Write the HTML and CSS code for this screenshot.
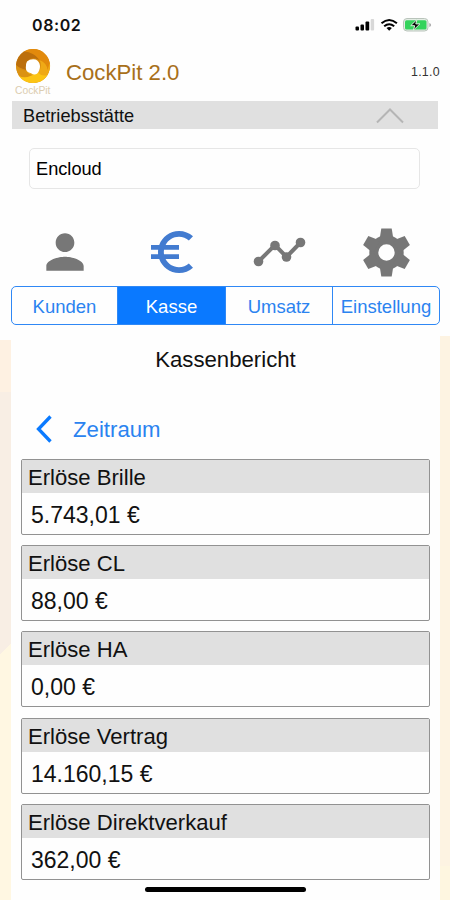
FILE: index.html
```html
<!DOCTYPE html>
<html lang="de">
<head>
  <meta charset="UTF-8">
  <meta name="viewport" content="width=device-width, initial-scale=1.0">
  <link rel="stylesheet" href="styles.css">
  <title>CockPit 2.0</title>
</head>
<body>
  <div class="status-bar">
    <span class="time">08:02</span>
    <svg class="status-icons" width="80" height="16" viewBox="0 0 80 16">
      <rect x="2.5" y="9.500" width="3.5" height="4" rx="1"/>
      <rect x="7.500" y="7.500" width="3.500" height="6" rx="1"/>
      <rect x="12.500" y="4.500" width="3.700" height="9" rx="1"/>
      <rect x="17.700" y="2" width="3.400" height="11.500" rx="1" fill="#d8d8d8"/>
      <path d="M28.500 6.300q7.700-6.600 15.400 0M31.200 9.300q5-4.200 10 0" fill="none" stroke="#000" stroke-width="2"/>
      <path d="M33.500 11.100q2.700-2 5.400 0l-2.700 2.700z"/>
      <rect x="50.500" y="1.500" width="24.500" height="12.500" rx="3.500" fill="#e3ece4" stroke="#b9c4bb"/>
      <rect x="52" y="3.200" width="21.500" height="9.200" rx="1.500" fill="#34d35c"/>
      <path d="M76.300 6v4q1.800-.4 1.800-2t-1.800-2z" fill="#aaa"/>
      <path d="M64 2.500l-6.300 6.200h4l-1.300 4.500 6.500-6.300h-4.100z" stroke="#d9f5df" stroke-width="1"/>
    </svg>
  </div>

  <header class="header">
    <div class="logo">
      <svg width="36" height="36" viewBox="0 0 36 36">
        <circle cx="18" cy="18" r="17" fill="#d98c11"/>
        <path d="M9 3.500A17 17 0 0 1 34.800 15Q35.500 20 32.500 25Q32 15 24.500 12Q19 5 9 3.500z" fill="#e28a0c"/>
        <path d="M1 17Q2 8 9 3.500Q19 4 24.500 12Q17 8 12.500 13Q10 18 11.500 22Q4 20 1 17z" fill="#bc6f0c"/>
        <path d="M34.800 15A17 17 0 0 1 24 34Q16 33 12 26Q19 28 23 24Q28 19 24.500 12Q32 15 32.500 22z" fill="#efa916"/>
        <path d="M4 28Q9 35.500 19 35A17 17 0 0 0 32.500 27Q27 29 23 24.500Q18 28 12 23.500Q7 22 4 28z" fill="#fcc414"/>
        <path d="M1 17Q5 22 12 23.500Q14 27 19 26.500Q10 31 4 28Q1 23 1 17z" fill="#db9212"/>
        <path d="M12 13.500Q15.500 10.500 20.500 11.500Q24.500 13 25 18Q25 23 22 25.800Q19 27.500 16 25.200Q11 24.500 10.800 20Q10.500 16 12 13.500z" fill="#fff"/>
      </svg>
      <span class="logo-name">CockPit</span>
    </div>
    <h1 class="title">CockPit 2.0</h1>
    <span class="version">1.1.0</span>
  </header>

  <div class="section-bar">
    <span>Betriebsstätte</span>
    <svg width="28" height="16" viewBox="0 0 28 16">
      <path d="M1 14.500L14 1.500l13 13" fill="none" stroke="#b5b5b5" stroke-width="2"/>
    </svg>
  </div>
  <div class="site-select">Encloud</div>

  <nav class="nav">
    <div class="nav-icons">
      <svg width="56" height="56" viewBox="0 0 24 24" fill="#777">
        <path d="M12 12c2.210 0 4-1.790 4-4s-1.790-4-4-4-4 1.790-4 4 1.790 4 4 4zm0 2c-2.670 0-8 1.340-8 4v2h16v-2c0-2.660-5.330-4-8-4z"/>
      </svg>
      <svg width="56" height="56" viewBox="0 0 24 24" fill="#427bd0">
        <path d="M15 18.500c-2.510 0-4.680-1.420-5.760-3.500H15v-2H8.580c-.05-.33-.08-.66-.08-1s.03-.67.08-1H15V9H9.240C10.320 6.920 12.500 5.500 15 5.500c1.610 0 3.090.59 4.230 1.570L21 5.300C19.410 3.870 17.300 3 15 3c-3.920 0-7.240 2.510-8.480 6H3v2h3.060c-.04.33-.06.66-.06 1s.02.67.06 1H3v2h3.520c1.240 3.490 4.560 6 8.480 6 2.310 0 4.410-.87 6-2.300l-1.780-1.770c-1.130.98-2.600 1.570-4.220 1.570z"/>
      </svg>
      <svg width="56" height="56" viewBox="0 0 56 56" fill="#777">
        <path d="M7.500 37.500L24 21l11.500 12L49.500 18.500" fill="none" stroke="#777" stroke-width="4"/>
        <circle cx="7.500" cy="37.500" r="4.800"/>
        <circle cx="24" cy="21.500" r="4.800"/>
        <circle cx="35.500" cy="33" r="4.800"/>
        <circle cx="49.500" cy="18.500" r="4.800"/>
      </svg>
      <svg width="56" height="56" viewBox="0 0 56 56" fill="#777">
        <circle cx="28.500" cy="28.500" r="12.700" fill="none" stroke="#777" stroke-width="9"/>
        <g id="teeth">
          <path id="tooth" d="M23.300 4.500h10.400l1.500 9.500-1 3H22.800l-1-3z"/>
          <use href="#tooth" transform="rotate(60 28.500 28.500)"/>
          <use href="#tooth" transform="rotate(120 28.500 28.500)"/>
        </g>
        <use href="#teeth" transform="rotate(180 28.500 28.500)"/>
      </svg>
    </div>
    <div class="tabs">
      <a class="tab">Kunden</a>
      <a class="tab active">Kasse</a>
      <a class="tab">Umsatz</a>
      <a class="tab">Einstellung</a>
    </div>
  </nav>

  <div class="content">
    <div class="side side-left"></div>
    <main class="report">
      <h2 class="report-title">Kassenbericht</h2>
      <a class="back">
        <svg width="16" height="28" viewBox="0 0 16 28">
          <path d="M14.500 1.500L2.500 14l12 12.500" fill="none" stroke="#0a7aff" stroke-width="3.300"/>
        </svg>
        <span>Zeitraum</span>
      </a>
      <div class="cards">
        <section class="card">
          <h3>Erlöse Brille</h3>
          <p>5.743,01 €</p>
        </section>
        <section class="card">
          <h3>Erlöse CL</h3>
          <p>88,00 €</p>
        </section>
        <section class="card">
          <h3>Erlöse HA</h3>
          <p>0,00 €</p>
        </section>
        <section class="card">
          <h3>Erlöse Vertrag</h3>
          <p>14.160,15 €</p>
        </section>
        <section class="card">
          <h3>Erlöse Direktverkauf</h3>
          <p>362,00 €</p>
        </section>
      </div>
      <div class="home-indicator"></div>
    </main>
    <div class="side side-right"></div>
  </div>
</body>
</html>
```

FILE: styles.css
```css
* {
  box-sizing: border-box;
}

body {
  margin: 0;
  width: 450px;
  height: 900px;
  overflow: hidden;
  background-color: #fefefe;
  color: #111;
  font-family: "Liberation Sans", Arial, sans-serif;
  font-size: 18.2px;
}

h1, h2, h3, p {
  margin: 0;
  font-weight: normal;
}

svg {
  display: block;
}

.status-bar {
  display: flex;
  justify-content: space-between;
  align-items: center;
  height: 48px;
  padding: 0 17px 0 32px;
}

.time {
  margin-top: 1px;
  font-family: Inter, sans-serif;
  font-size: 16px;
  font-weight: 600;
  letter-spacing: 0.6px;
}

.status-icons {
  margin-top: 1px;
}

.header {
  display: flex;
  align-items: center;
  height: 53px;
  padding: 0 10px 0 15px;
}

.logo {
  width: 36px;
  height: 53px;
}

.logo-name {
  display: block;
  font-size: 10.3px;
  line-height: 14px;
  color: #dccdb0;
}

.title {
  margin: -4px 0 0 15px;
  font-size: 22.2px;
  color: #a8701a;
}

.version {
  margin: -6px 0 0 auto;
  font-size: 12.4px;
  letter-spacing: 0.3px;
  color: #333;
}

.section-bar {
  display: flex;
  justify-content: space-between;
  align-items: center;
  height: 28px;
  margin: 0 12px;
  padding: 2px 34px 0 11px;
  background-color: #e0e0e0;
}

.site-select {
  height: 41px;
  margin: 19px 30px 0 29px;
  padding-left: 6px;
  border: 1px solid #e6e6e6;
  border-radius: 5px;
  line-height: 41px;
  color: #000;
}

.nav {
  margin: 35px 10px 0 11px;
}

.nav-icons {
  display: grid;
  grid-template-columns: repeat(4, 1fr);
  justify-items: center;
  height: 62px;
}

.tabs {
  display: grid;
  grid-template-columns: 105px 108px 107px 1fr;
  height: 39px;
  border: 1px solid #2f88f5;
  border-radius: 5px;
  overflow: hidden;
}

.tab {
  text-align: center;
  font-size: 18.5px;
  line-height: 39px;
  color: #2b83f0;
}

.tab + .tab {
  border-left: 1px solid #2f88f5;
}

.tab.active {
  background-color: #0a79ff;
  color: #fff;
}

.content {
  display: flex;
  height: 564px;
  margin-top: 11px;
}

.side-left {
  width: 11px;
  margin-top: 4px;
  background: linear-gradient(#f8eee4, #f8eee4) no-repeat 0 52px / 11px 251px,
    linear-gradient(135deg, #f8eee4 50%, #fff7e2 50%) no-repeat 0 303px / 11px 11px,
    linear-gradient(#fef1e2 52px, #fff7e2 52px);
}

.side-right {
  width: 10px;
  background: linear-gradient(#fdf3e2 530px, #fef6e0 530px);
}

.report {
  flex: 1;
  display: flex;
  flex-direction: column;
  padding: 0 10px;
}

.report-title {
  margin-top: 11px;
  font-size: 22.2px;
  line-height: 26px;
  text-align: center;
}

.back {
  display: flex;
  align-items: center;
  gap: 21px;
  height: 28px;
  margin: 42px 0 0 15px;
  font-size: 22.2px;
  color: #2b83f0;
}

.back span {
  padding-top: 2px;
}

.cards {
  display: flex;
  flex-direction: column;
  gap: 10.4px;
  margin-top: 15.5px;
}

.card {
  height: 76px;
  border: 1.5px solid #929292;
  border-radius: 2px;
}

.card h3 {
  height: 33px;
  padding-left: 6px;
  background-color: #e0e0e0;
  font-size: 22.1px;
  line-height: 35px;
}

.card p {
  padding-left: 9px;
  font-size: 23px;
  line-height: 44px;
}

.home-indicator {
  width: 161px;
  height: 5px;
  margin: 6.5px auto 0;
  border-radius: 3px;
  background-color: #000;
}
```
